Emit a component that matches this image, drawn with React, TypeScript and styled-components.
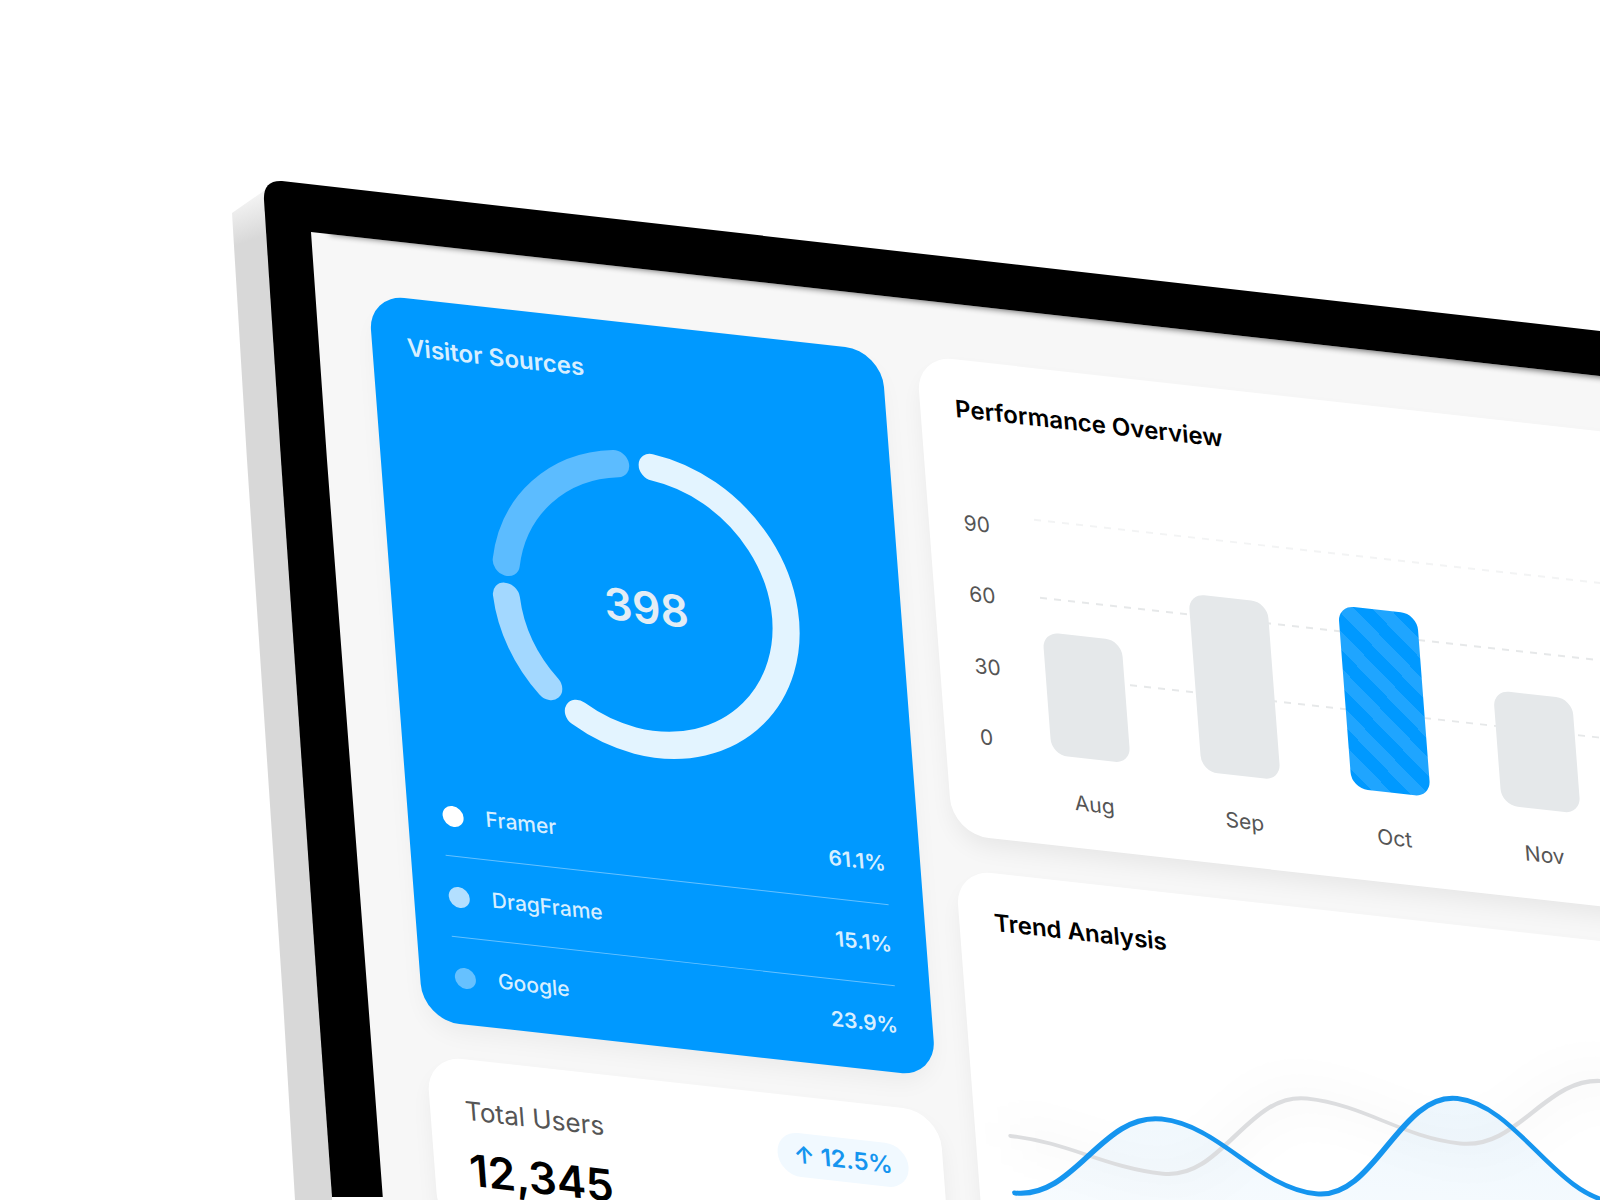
import React from "react";
import styled, { createGlobalStyle } from "styled-components";

const GlobalStyle = createGlobalStyle`
  *, *::before, *::after { box-sizing: border-box; }
  body {
    margin: 0;
    background: #fff;
    font-family: Inter, "Liberation Sans", sans-serif;
    -webkit-font-smoothing: antialiased;
  }
`;

const Stage = styled.main`
  position: relative;
  width: 100%;
  height: 100vh;
  overflow: hidden;
  background: #fff;
`;

const DeviceArt = styled.svg`
  position: absolute;
  top: 0;
  left: 0;
  overflow: visible;
`;

const Board = styled.div`
  position: relative;
  display: grid;
  grid-template-columns: 513px minmax(0, 1fr);
  align-items: start;
  gap: 35px;
  width: 120vw;
  padding: 56px 53px;
  transform-origin: 0 0;
  transform: matrix(1, 0.1115, 0.076, 1, 311, 232);
`;

const Column = styled.div`
  display: flex;
  flex-direction: column;
  gap: 35px;
`;

const Card = styled.section<{ $accent?: boolean }>`
  display: flex;
  flex-direction: column;
  padding: 35px;
  border-radius: 36px;
  color: ${(p) => (p.$accent ? "rgba(255, 255, 255, 0.85)" : "#000")};
  background: ${(p) => (p.$accent ? "#0099ff" : "#fff")};
  box-shadow: 0 12px 24px -4px rgba(0, 0, 0, ${(p) => (p.$accent ? 0.05 : 0.07)});
`;

const Title = styled.h2`
  margin: 0;
  font-size: 24px;
  font-weight: 600;
  line-height: 30px;
`;

const DonutWrap = styled.div`
  position: relative;
  display: grid;
  place-items: center;
  padding: 63px 0 69px;
`;

const DonutTotal = styled.strong`
  position: absolute;
  font-size: 44px;
  font-weight: 600;
  line-height: 56px;
  color: #e3edf5;
`;

const Legend = styled.ul`
  margin: 0;
  padding: 0;
  list-style: none;
`;

const LegendRow = styled.li`
  display: flex;
  align-items: center;
  gap: 22px;
  font-size: 21px;
  font-weight: 500;
  line-height: 24px;

  & + & {
    margin-top: 28px;
    padding-top: 28px;
    border-top: 1px solid rgba(255, 255, 255, 0.4);
  }
`;

const Dot = styled.span<{ $color: string }>`
  width: 21px;
  height: 21px;
  border-radius: 50%;
  background: ${(p) => p.$color};
`;

const Share = styled.span`
  margin-left: auto;
  font-weight: 600;
`;

const StatHead = styled.div`
  display: flex;
  justify-content: space-between;
  align-items: flex-start;
  padding-top: 2px;
`;

const StatLabel = styled.h2`
  margin: 0;
  font-size: 26px;
  font-weight: 400;
  line-height: 30px;
  color: #555;
`;

const StatValue = styled.p`
  margin: 16px 0 0;
  font-size: 44px;
  font-weight: 600;
  line-height: 56px;
`;

const Delta = styled.span`
  padding: 8px 16px;
  border-radius: 24px;
  font-size: 24px;
  font-weight: 600;
  line-height: 28px;
  color: #1595ef;
  background: #f1f9ff;
`;

const Chart = styled.div`
  display: grid;
  grid-template-columns: 71px minmax(0, 1fr);
  row-gap: 34px;
  margin-top: 87px;
`;

const Axis = styled.div`
  display: flex;
  flex-direction: column;
  justify-content: space-between;
  height: 238px;
  font-size: 21px;
  line-height: 24px;
  color: #555;
`;

const Plot = styled.div`
  position: relative;
  height: 236px;
`;

const GridLines = styled.div`
  position: absolute;
  inset: 0;
  display: flex;
  flex-direction: column;
  gap: 76px;
`;

const GridLine = styled.div<{ $faint?: boolean }>`
  height: 2px;
  opacity: ${(p) => (p.$faint ? 0.5 : 1)};
  background: repeating-linear-gradient(90deg, #e6e8e9 0 7px, transparent 7px 14px);
`;

const Bars = styled.div`
  position: relative;
  display: flex;
  align-items: flex-end;
  gap: 71px;
  height: 100%;
`;

const Bar = styled.div<{ $active?: boolean }>`
  flex: none;
  width: 79px;
  border-radius: 16px;
  background: ${(p) =>
    p.$active
      ? "repeating-linear-gradient(45deg, #0099ff 0 14px, #1fa5ff 14px 28px)"
      : "#e5e8ea"};
`;

const Months = styled.div`
  grid-column: 2;
  display: flex;
  gap: 71px;
  font-size: 21px;
  line-height: 20px;
  color: #555;
`;

const Month = styled.span`
  flex: none;
  width: 79px;
  text-align: center;
`;

const TrendArt = styled.svg`
  display: block;
  overflow: visible;
  margin-top: 65px;
`;

type Point = [number, number];

const DONUT_RADIUS = 140;
const DONUT_CENTER = 154;

const segments = [
  { from: 7, to: 213, color: "#e3f4ff" },
  { from: 228, to: 267, color: "#a3d8ff" },
  { from: 281, to: 352, color: "#5cbcff" },
];

const sources = [
  { name: "Framer", share: "61.1%", color: "#ffffff" },
  { name: "DragFrame", share: "15.1%", color: "#b3dfff" },
  { name: "Google", share: "23.9%", color: "#66c1ff" },
];

const months = [
  { name: "Aug", height: 123 },
  { name: "Sep", height: 178 },
  { name: "Oct", height: 183, active: true },
  { name: "Nov", height: 115 },
];

const visits: Point[] = [[0, 190], [154, 99], [304, 157], [454, 45], [604, 132], [755, 20]];
const baseline: Point[] = [[0, 133], [151, 154], [302, 62], [453, 90], [604, 11], [755, 60]];

function arcPath(from: number, to: number) {
  const at = (deg: number) => {
    const rad = (deg * Math.PI) / 180;
    return `${DONUT_CENTER + DONUT_RADIUS * Math.sin(rad)} ${DONUT_CENTER - DONUT_RADIUS * Math.cos(rad)}`;
  };
  const large = to - from > 180 ? 1 : 0;
  return `M${at(from)} A${DONUT_RADIUS} ${DONUT_RADIUS} 0 ${large} 1 ${at(to)}`;
}

function wavePath(points: Point[]) {
  return points
    .map(([x, y], i) => {
      if (i === 0) return `M${x} ${y}`;
      const [px, py] = points[i - 1];
      const reach = (x - px) * 0.39;
      return `C${px + reach} ${py} ${x - reach} ${y} ${x} ${y}`;
    })
    .join(" ");
}

function Device() {
  return (
    <DeviceArt width="1600" height="1200" viewBox="0 0 1600 1200" aria-hidden="true">
      <defs>
        <linearGradient id="side" x1="238" y1="200" x2="252" y2="240" gradientUnits="userSpaceOnUse">
          <stop offset="0" stopColor="#f4f4f4" />
          <stop offset="0.5" stopColor="#e6e6e6" />
          <stop offset="1" stopColor="#d8d8d8" />
        </linearGradient>
        <filter id="lip" x="-10%" y="-50%" width="120%" height="200%">
          <feGaussianBlur stdDeviation="3" />
        </filter>
        <clipPath id="glass">
          <path d="M311 232 L2111 433 V1600 H412 Z" />
        </clipPath>
      </defs>
      <path d="M232 213 L268 188 L332 1197 V1200 H295 L283 1000 L247 460 Z" fill="url(#side)" />
      <path
        d="M264 200 Q263 180 282 181 L1600 331 L2100 388 V1197 H332 L318 1000 L281 460 Z"
        fill="#000"
      />
      <path d="M311 232 L2111 433 V1600 H412 L383 1200 L368 1000 L327 460 Z" fill="#f7f7f7" />
      <g clipPath="url(#glass)">
        <path d="M330 224 L2111 422 V435 L330 234 Z" fill="#000" opacity="0.6" filter="url(#lip)" />
      </g>
    </DeviceArt>
  );
}

function VisitorSources() {
  return (
    <Card $accent>
      <Title>Visitor Sources</Title>
      <DonutWrap>
        <svg width="308" height="308" viewBox="1 0 308 308" fill="none" overflow="visible" aria-hidden="true">
          {segments.map((s) => (
            <path key={s.from} d={arcPath(s.from, s.to)} stroke={s.color} strokeWidth="27" strokeLinecap="round" />
          ))}
        </svg>
        <DonutTotal>398</DonutTotal>
      </DonutWrap>
      <Legend>
        {sources.map((s) => (
          <LegendRow key={s.name}>
            <Dot $color={s.color} />
            <span>{s.name}</span>
            <Share>{s.share}</Share>
          </LegendRow>
        ))}
      </Legend>
    </Card>
  );
}

function TotalUsers() {
  return (
    <Card>
      <StatHead>
        <div>
          <StatLabel>Total Users</StatLabel>
          <StatValue>12,345</StatValue>
        </div>
        <Delta>↑ 12.5%</Delta>
      </StatHead>
    </Card>
  );
}

function Performance() {
  return (
    <Card>
      <Title>Performance Overview</Title>
      <Chart>
        <Axis>
          <span>90</span>
          <span>60</span>
          <span>30</span>
          <span>0</span>
        </Axis>
        <Plot>
          <GridLines>
            <GridLine $faint />
            <GridLine />
            <GridLine />
          </GridLines>
          <Bars>
            {months.map((m) => (
              <Bar key={m.name} $active={m.active} style={{ height: m.height }} />
            ))}
          </Bars>
        </Plot>
        <Months>
          {months.map((m) => (
            <Month key={m.name}>{m.name}</Month>
          ))}
        </Months>
      </Chart>
    </Card>
  );
}

function Trend() {
  return (
    <Card>
      <Title>Trend Analysis</Title>
      <TrendArt width="755" height="300" viewBox="0 0 755 300" fill="none" aria-hidden="true">
        <defs>
          <linearGradient id="visitsFill" x1="0" y1="40" x2="0" y2="300" gradientUnits="userSpaceOnUse">
            <stop offset="0" stopColor="#0f8ee9" stopOpacity="0.07" />
            <stop offset="1" stopColor="#0f8ee9" stopOpacity="0.01" />
          </linearGradient>
          <filter id="haze" x="-20%" y="-80%" width="140%" height="260%">
            <feGaussianBlur stdDeviation="20" />
          </filter>
        </defs>
        <path d={wavePath(baseline)} stroke="#000" strokeOpacity="0.02" strokeWidth="32" filter="url(#haze)" />
        <path d={`${wavePath(visits)} V300 H0 Z`} fill="url(#visitsFill)" />
        <path d={wavePath(baseline)} stroke="#dcdddf" strokeWidth="4" strokeLinecap="round" />
        <path d={wavePath(visits)} stroke="#1595ef" strokeWidth="5" strokeLinecap="round" />
      </TrendArt>
    </Card>
  );
}

export default function App() {
  return (
    <>
      <GlobalStyle />
      <Stage>
        <Device />
        <Board>
          <Column>
            <VisitorSources />
            <TotalUsers />
          </Column>
          <Column>
            <Performance />
            <Trend />
          </Column>
        </Board>
      </Stage>
    </>
  );
}
